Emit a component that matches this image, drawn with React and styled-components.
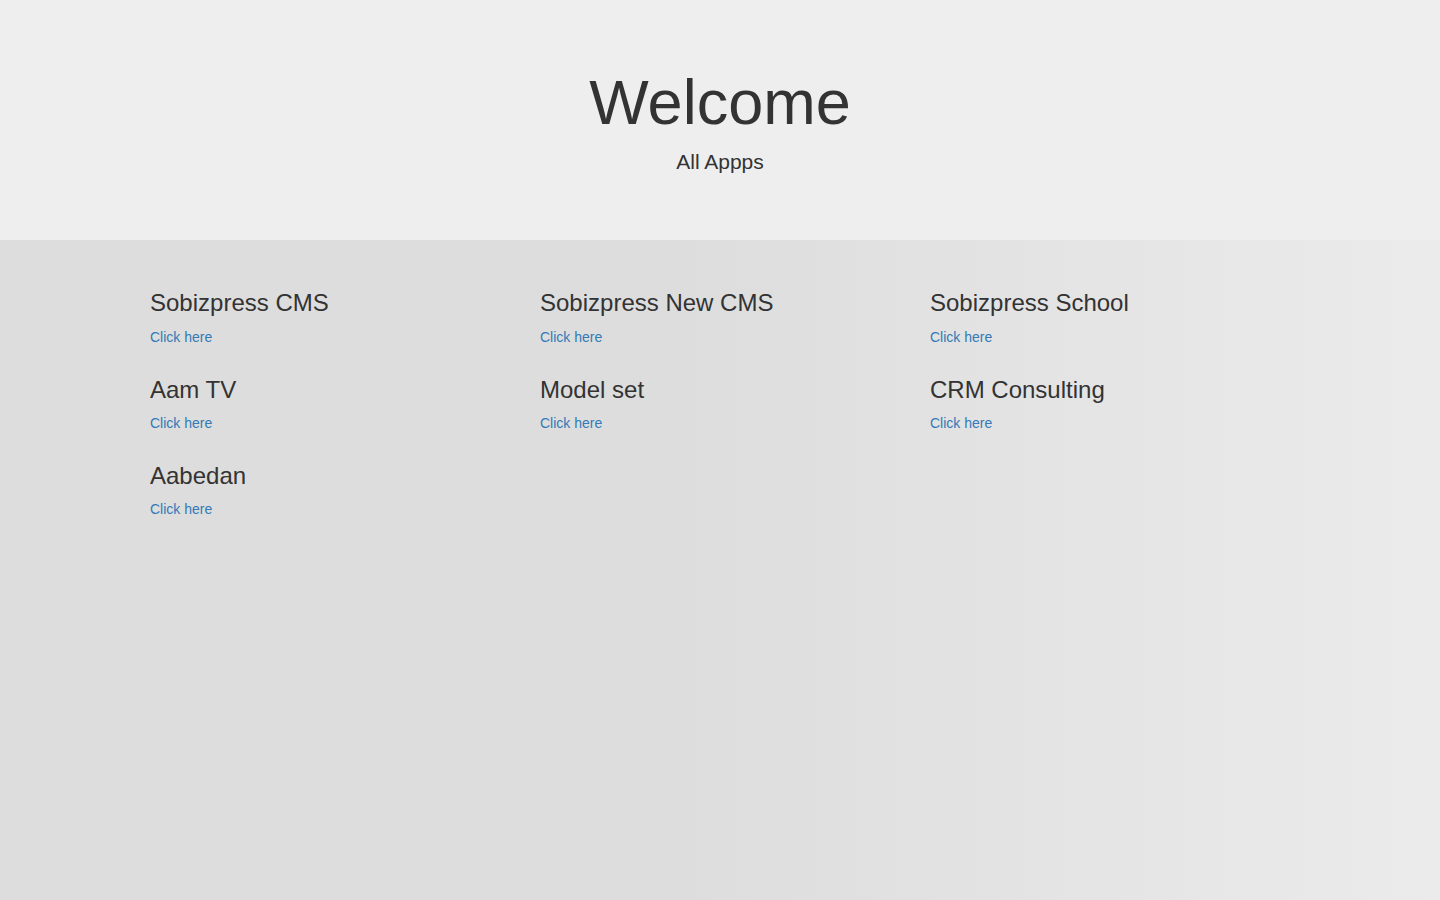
import React from "react";
import styled, { createGlobalStyle } from "styled-components";

const GlobalStyle = createGlobalStyle`
  html, body {
    margin: 0;
    padding: 0;
  }
  body {
    min-height: 900px;
    font-family: "Liberation Sans", Arial, sans-serif;
    font-size: 14px;
    line-height: 1.42857;
    color: #333;
    background: linear-gradient(to right, #dddddd 47%, #ebebeb 100%);
  }
`;

const apps = [
  "Sobizpress CMS",
  "Sobizpress New CMS",
  "Sobizpress School",
  "Aam TV",
  "Model set",
  "CRM Consulting",
  "Aabedan",
];

const App = () => {
  return (
    <>
      <GlobalStyle />
      <Jumbotron>
        <Container>
          <Title>Welcome</Title>
          <Lead>All Appps</Lead>
        </Container>
      </Jumbotron>
      <Container>
        <AppGrid>
          {apps.map((name) => (
            <AppItem key={name}>
              <AppName>{name}</AppName>
              <AppLink href="#">Click here</AppLink>
            </AppItem>
          ))}
        </AppGrid>
      </Container>
    </>
  );
};

const Jumbotron = styled.div`
  background: #eeeeee;
  padding: 48px 0;
  margin-bottom: 30px;
  text-align: center;
`;

const Container = styled.div`
  width: 1170px;
  margin: 0 auto;
  padding: 0 15px;
  box-sizing: border-box;
`;

const Title = styled.h1`
  margin: 20px 0 10px;
  font-size: 63px;
  font-weight: 500;
  line-height: 1.1;
`;

const Lead = styled.p`
  margin: 0 0 15px;
  font-size: 21px;
  line-height: 30px;
  font-weight: 200;
`;

const AppGrid = styled.div`
  display: grid;
  grid-template-columns: repeat(3, 1fr);
  column-gap: 30px;
`;

const AppItem = styled.div`
  display: flex;
  flex-direction: column;
  align-items: flex-start;
`;

const AppName = styled.h3`
  margin: 20px 0 10px;
  font-size: 24px;
  font-weight: 500;
  line-height: 1.1;
`;

const AppLink = styled.a`
  display: block;
  margin-bottom: 10px;
  color: #337ab7;
  text-decoration: none;
  font-size: 14px;
  line-height: 20px;
`;

export default App;
